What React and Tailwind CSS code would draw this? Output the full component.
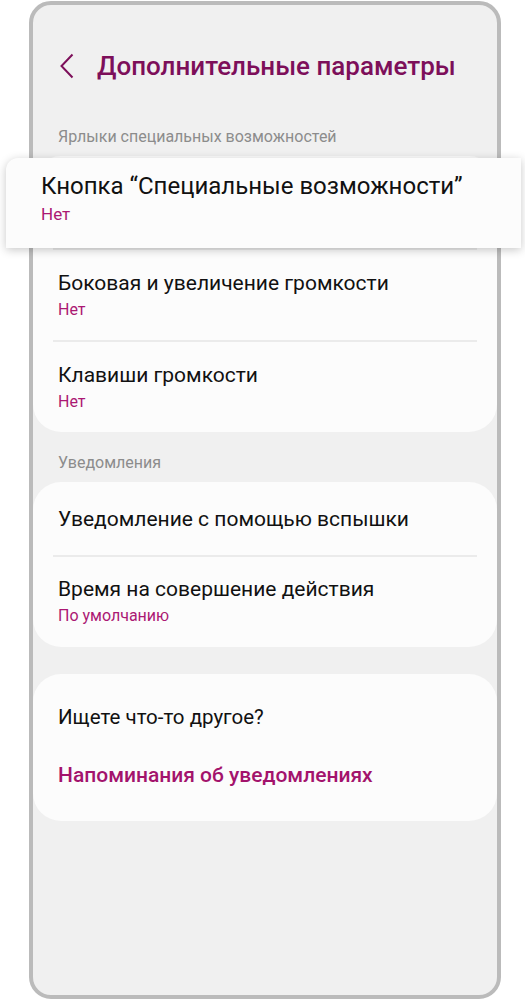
import React from "react";

const font = { fontFamily: "Roboto, 'Noto Sans', sans-serif" };

const Item = ({ title, sub, divider, pad, hidden }) => {
  return (
    <div>
      {divider && <div className="mx-[20px] h-[2px] bg-[#ebebeb]" />}
      <div className={"pl-[25px] " + pad + (hidden ? " invisible" : "")}>
        <div className="text-[21px] leading-[26px] text-[#111111]">{title}</div>
        {sub && (
          <div className="mt-[4px] text-[16px] leading-[20px] text-[#ab1873]">
            {sub}
          </div>
        )}
      </div>
    </div>
  );
};

const SectionLabel = ({ children, className }) => (
  <div className={"pl-[25px] text-[16px] leading-[20px] text-[#8c8c8c] " + className}>
    {children}
  </div>
);

const App = () => {
  return (
    <div className="relative w-[525px] h-[1000px] bg-white" style={font}>
      <div className="ml-[29px] mt-[1px] w-[472px] h-[998px] border-4 border-[#bbbbbb] rounded-[22px] bg-[#f0f0f0] overflow-hidden">
        {/* header */}
        <div className="flex items-center pl-[27px] pt-[43px] h-[79px]">
          <svg width="14" height="26" viewBox="0 0 14 26" className="shrink-0">
            <polyline
              points="12.5,1.5 1.5,13 12.5,24.5"
              fill="none"
              stroke="#7d0f5a"
              strokeWidth="2"
            />
          </svg>
          <h1 className="ml-[23px] text-[26px] leading-[36px] font-medium text-[#7d0f5a]">
            Дополнительные параметры
          </h1>
        </div>

        <SectionLabel className="mt-[43px] pb-[9px]">
          Ярлыки специальных возможностей
        </SectionLabel>
        <div className="bg-[#fcfcfc] rounded-[28px]">
          {/* sits under the enlarged copy below */}
          <Item title="Кнопка “Специальные возможности”" sub="Нет" pad="pt-[22px] pb-[20px]" hidden />
          <Item title="Боковая и увеличение громкости" sub="Нет" divider pad="pt-[20px] pb-[20px]" />
          <Item title="Клавиши громкости" sub="Нет" divider pad="pt-[20px] pb-[20px]" />
        </div>

        <SectionLabel className="pt-[21px] pb-[9px]">Уведомления</SectionLabel>
        <div className="bg-[#fcfcfc] rounded-[28px]">
          <Item title="Уведомление с помощью вспышки" pad="pt-[24px] pb-[23px]" />
          <Item title="Время на совершение действия" sub="По умолчанию" divider pad="pt-[19px] pb-[21px]" />
        </div>

        <div className="mt-[27px] bg-[#fcfcfc] rounded-[28px] pl-[25px] pt-[30px] pb-[33px]">
          <div className="text-[20.5px] leading-[26px] text-[#111111]">
            Ищете что-то другое?
          </div>
          <div className="mt-[32px] text-[21px] leading-[26px] font-medium text-[#a3136c]">
            Напоминания об уведомлениях
          </div>
        </div>
      </div>

      {/* highlighted, enlarged item */}
      <div className="absolute left-[6px] top-[157px] w-[515px] h-[90px] bg-[#fcfcfc] rounded-tl-[12px] shadow-[0_2px_10px_rgba(0,0,0,0.22)] pl-[35px] pt-[13px]">
        <div className="text-[24px] leading-[30px] text-[#111111]">
          Кнопка “Специальные возможности”
        </div>
        <div className="mt-[2px] text-[17px] leading-[22px] text-[#ab1873]">Нет</div>
      </div>
    </div>
  );
};

export default App;
